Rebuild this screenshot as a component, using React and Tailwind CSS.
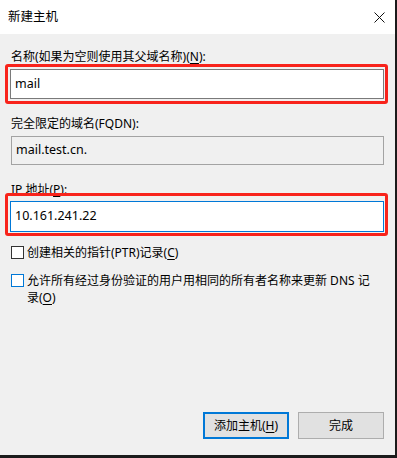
import React from 'react';

const Mn = ({ children }) => <span className="underline underline-offset-2">{children}</span>;

const CheckRow = ({ focused, children }) => (
  <div className="flex items-start">
    <div
      className={
        'mt-[2px] h-[13px] w-[13px] shrink-0 bg-white border ' +
        (focused ? 'border-[#0078d7]' : 'border-[#333333]')
      }
    />
    <div className="ml-[3px] w-[352px] leading-[17px]">{children}</div>
  </div>
);

export default function App() {
  return (
    <div className="h-[458px] w-[397px] bg-[#f0f0f0] text-[12px] text-black font-['Noto_Sans','Noto_Sans_CJK_SC',sans-serif]">
      <div className="flex h-[458px] w-[397px] flex-col border-b-[3px] border-r-[2px] border-[#1b1b1b]">
        {/* title bar */}
        <div className="flex h-[34px] shrink-0 items-center justify-between bg-white pl-[8px] pr-[9px]">
          <span className="text-[12.5px] leading-[16px]">新建主机</span>
          <svg width="11" height="11" viewBox="0 0 11 11" className="mr-[1px]">
            <path d="M0.5 0.5 L10.5 10.5 M10.5 0.5 L0.5 10.5" stroke="#111" strokeWidth="1" fill="none" />
          </svg>
        </div>

        <div className="flex flex-1 flex-col pl-[5px]">
          <div className="mt-[15px] pl-[6px] leading-[16px]">
            名称(如果为空则使用其父域名称)(<Mn>N</Mn>):
          </div>

          <div className="mt-[-1px] w-[383px] rounded-[3px] border-[3px] border-[#f8231b] p-[2px]">
            <div className="flex h-[30px] w-[374px] items-center border border-[#7a7a7a] bg-white px-[4px] text-[12.5px]">
              mail
            </div>
          </div>

          <div className="mt-[12px] pl-[6px] leading-[16px]">完全限定的域名(FQDN):</div>
          <div className="mt-[4px] ml-[6px] flex h-[29px] w-[373px] items-center border border-[#a3a3a3] px-[4px] text-[12.5px]">
            mail.test.cn.
          </div>

          <div className="mt-[17px] pl-[6px] leading-[16px]">
            IP 地址(<Mn>P</Mn>):
          </div>
          <div className="mt-[-5px] w-[383px] rounded-[3px] border-[3px] border-[#f8231b] px-[2px] pb-[1px] pt-[5px]">
            <div className="flex h-[31px] w-[374px] items-center border border-[#0078d7] bg-white px-[4px] text-[12.5px]">
              10.161.241.22
            </div>
          </div>

          <div className="mt-[8px] flex flex-col gap-[11px] pl-[6px]">
            <CheckRow>
              创建相关的指针(PTR)记录(<Mn>C</Mn>)
            </CheckRow>
            <CheckRow focused>
              允许所有经过身份验证的用户用相同的所有者名称来更新 DNS 记录(<Mn>O</Mn>)
            </CheckRow>
          </div>

          <div className="mt-auto mb-[16px] mr-[11px] flex justify-end gap-[9px]">
            <button className="flex h-[27px] w-[86px] items-center justify-center border-2 border-[#0078d7] bg-[#e1e1e1]">
              添加主机(<Mn>H</Mn>)
            </button>
            <button className="flex h-[27px] w-[86px] items-center justify-center border border-[#adadad] bg-[#e1e1e1]">
              完成
            </button>
          </div>
        </div>
      </div>
    </div>
  );
}
